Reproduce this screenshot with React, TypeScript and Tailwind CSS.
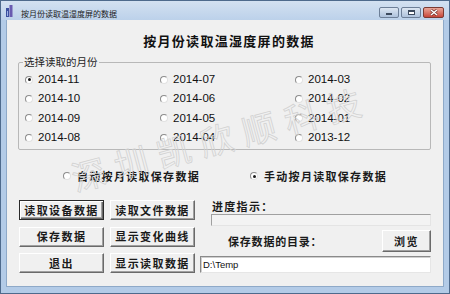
import React from "react";

const months = [
  "2014-11", "2014-07", "2014-03",
  "2014-10", "2014-06", "2014-02",
  "2014-09", "2014-05", "2014-01",
  "2014-08", "2014-04", "2013-12",
];

const cjk = "font-['Noto_Sans_CJK_SC',sans-serif]";

function Radio({ checked }: { checked?: boolean }) {
  return (
    <span className="flex h-[8px] w-[8px] shrink-0 items-center justify-center rounded-full border border-[#8c8c8c] border-b-[#e2e2e2] border-r-[#e2e2e2] bg-white">
      {checked && <span className="h-[3px] w-[3px] rounded-full bg-[#1a1a1a]" />}
    </span>
  );
}

function WinButton({ label, isDefault }: { label: string; isDefault?: boolean }) {
  return (
    <button
      className={`flex h-[20px] w-[85px] items-center justify-center bg-[#f0f0f0] text-[11px] font-bold tracking-[1.4px] text-[#1a1a1a] ${cjk} ${
        isDefault
          ? "border border-[#2a2a2a] shadow-[inset_1px_1px_0_#fff,inset_-1px_-1px_0_#6a6a6a,inset_-2px_-2px_0_#a0a0a0]"
          : "border border-t-white border-l-white border-r-[#6a6a6a] border-b-[#6a6a6a] shadow-[inset_-1px_-1px_0_#a0a0a0]"
      }`}
    >
      {label}
    </button>
  );
}

function TitleIcon() {
  return (
    <svg width="7" height="12" viewBox="0 0 7 12">
      <rect x="0" y="3" width="3" height="9" fill="#3b4f9e" />
      <rect x="3.5" y="0" width="3" height="12" fill="#6a5bb0" />
      <rect x="1" y="6" width="1" height="5" fill="#9fb3e6" />
    </svg>
  );
}

export default function App() {
  return (
    <div className="relative flex h-[294px] w-[450px] flex-col overflow-hidden border border-[#4e6a8c] bg-[#b3cbe7]">
      {/* title bar */}
      <div className="flex h-[19px] shrink-0 items-start bg-gradient-to-b from-[#d3e1f1] to-[#bcd1ea]">
        <div className="ml-[5px] mt-[4px]">
          <TitleIcon />
        </div>
        <span className={`ml-[8px] mt-[8px] text-[8px] leading-[10px] text-[#1c1c1c] ${cjk}`}>
          按月份读取温湿度屏的数据
        </span>
        <div className="ml-auto mr-[5px] mt-[6px] flex gap-[2px]">
          <div className="flex h-[11px] w-[20px] items-end justify-center rounded-[2px] border border-[#6d7f98] bg-gradient-to-b from-[#dce6f2] to-[#aec2dc] pb-[2px]">
            <span className="h-[2px] w-[6px] border border-[#3c4a5e] bg-white" />
          </div>
          <div className="flex h-[11px] w-[20px] items-center justify-center rounded-[2px] border border-[#6d7f98] bg-gradient-to-b from-[#dce6f2] to-[#aec2dc]">
            <span className="h-[5px] w-[7px] border border-[#3c4a5e] border-t-2 bg-white" />
          </div>
          <div className="flex h-[11px] w-[21px] items-center justify-center rounded-[2px] border border-[#7a3a32] bg-gradient-to-b from-[#e8a598] to-[#c7453a]">
            <svg width="8" height="7" viewBox="0 0 8 7">
              <path d="M1 1 L7 6 M7 1 L1 6" stroke="#5b1e18" strokeWidth="2.6" />
              <path d="M1 1 L7 6 M7 1 L1 6" stroke="#fff" strokeWidth="1.6" />
            </svg>
          </div>
        </div>
      </div>

      {/* client area */}
      <div className="mx-[5px] mb-[6px] flex flex-1 flex-col border border-t-0 border-[#8ea9c8] bg-[#f0f0f0]">
        <div className="pl-[8px] pt-[13px]">
          <h1 className={`h-[16px] text-center text-[13px] font-bold leading-[16px] tracking-[1.3px] text-[#111] ${cjk}`}>
            按月份读取温湿度屏的数据
          </h1>
        </div>

        <fieldset className="ml-[11px] mt-[7px] w-[413px] rounded-[2px] border border-[#b8b8b8] pb-[2px]">
          <legend className={`ml-[4px] px-[1px] text-[10.5px] leading-[12px] text-[#1e1e1e] ${cjk}`}>
            选择读取的月份
          </legend>
          <div className="grid grid-cols-[135px_135px_135px] pl-[6px] pt-[2px]">
            {months.map((m, i) => (
              <div key={m} className="flex h-[19.33px] items-center gap-[5px]">
                <Radio checked={i === 0} />
                <span className="font-['Liberation_Sans',sans-serif] text-[11.5px] text-[#111]">{m}</span>
              </div>
            ))}
          </div>
        </fieldset>

        <div className="mt-[18px] flex h-[16px] items-center pl-[56px]">
          <div className="flex w-[187px] items-center gap-[6px]">
            <Radio />
            <span className={`text-[11px] font-bold tracking-[1.3px] text-[#1a1a1a] ${cjk}`}>自动按月读取保存数据</span>
          </div>
          <div className="flex items-center gap-[6px]">
            <Radio checked />
            <span className={`text-[11px] font-bold tracking-[1.3px] text-[#1a1a1a] ${cjk}`}>手动按月读取保存数据</span>
          </div>
        </div>

        <div className="mt-[16px] flex pl-[12px]">
          <div className="grid grid-cols-[85px_85px] gap-x-[6px] gap-y-[6px]">
            <WinButton label="读取设备数据" isDefault />
            <WinButton label="读取文件数据" />
            <WinButton label="保存数据" />
            <WinButton label="显示变化曲线" />
            <WinButton label="退出" />
            <WinButton label="显示读取数据" />
          </div>

          <div className="ml-[5px] flex w-[231px] flex-col">
            <span className={`h-[12px] pl-[12px] text-[11px] font-bold leading-[12px] tracking-[1.3px] text-[#1a1a1a] ${cjk}`}>
              进度指示：
            </span>
            <div className="ml-[11px] mt-[2px] h-[12px] border border-t-[#a0a0a0] border-l-[#a0a0a0] border-r-[#e4e4e4] border-b-[#e4e4e4] bg-[#f3f3f3]" />
            <div className="mt-[4px] flex h-[22px] items-center">
              <span className={`pl-[28px] text-[11px] font-bold tracking-[0.8px] text-[#1a1a1a] ${cjk}`}>
                保存数据的目录：
              </span>
              <button
                className={`ml-auto flex h-[22px] w-[49px] items-center justify-center border border-t-white border-l-white border-r-[#6a6a6a] border-b-[#6a6a6a] bg-[#f0f0f0] text-[11px] font-bold tracking-[1.4px] text-[#1a1a1a] shadow-[inset_-1px_-1px_0_#a0a0a0] ${cjk}`}
              >
                浏览
              </button>
            </div>
            <div className="mt-[4px] flex h-[17px] items-center border border-t-[#8a8a8a] border-l-[#8a8a8a] border-r-[#e6e6e6] border-b-[#e6e6e6] bg-white pl-[2px] shadow-[inset_1px_1px_0_#cfcfcf]">
              <span className="font-['Liberation_Sans',sans-serif] text-[9.5px] text-[#111]">D:\Temp</span>
            </div>
          </div>
        </div>
      </div>

      {/* watermark over the dialog */}
      <div className="pointer-events-none absolute left-[220px] top-[137px] -translate-x-1/2 -translate-y-1/2 rotate-[-15deg] whitespace-nowrap font-['Noto_Sans_CJK_SC',serif] text-[34px] leading-[36px] tracking-[10px] text-transparent [-webkit-text-stroke:0.8px_#d2d2d2]">
        深圳凯欣顺科技
      </div>
    </div>
  );
}
